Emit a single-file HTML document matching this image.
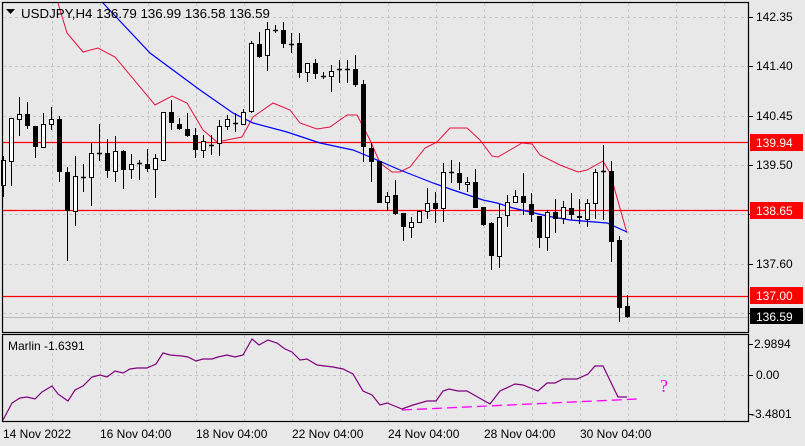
<!DOCTYPE html>
<html><head><meta charset="utf-8"><style>
html,body{margin:0;padding:0;background:#e8e8e8;}
svg{display:block;font-family:"Liberation Sans",sans-serif;}
</style></head><body>
<svg id="s" width="805" height="446" viewBox="0 0 805 446" xmlns="http://www.w3.org/2000/svg">
<rect width="805" height="446" fill="#e8e8e8"/>
<g id="grid" stroke="#c4c4c4" stroke-dasharray="3,3" stroke-width="1"></g>
<g id="lines"></g>
<g id="candles"></g>
<g fill="none" stroke="#000" stroke-width="1.2">
<rect x="2.5" y="2.5" width="746" height="330"/>
<rect x="2.5" y="334.5" width="746" height="87"/>
</g>
<text x="21" y="18" font-size="13.3" fill="#000">USDJPY,H4  136.79 136.99 136.58 136.59</text>
<polygon points="6,9 15,9 10.5,14" fill="#000"/>
<g font-size="12" fill="#000">
<text x="756" y="21">142.35</text>
<text x="756" y="70">141.40</text>
<text x="756" y="120">140.45</text>
<text x="756" y="169">139.50</text>
<text x="756" y="268">137.60</text>
<text x="754" y="348">2.9894</text>
<text x="756" y="379">0.00</text>
<text x="751" y="418">-3.4801</text>
<text x="8" y="350">Marlin -1.6391</text>
<text x="3" y="438">14 Nov 2022</text>
<text x="100" y="438">16 Nov 04:00</text>
<text x="196" y="438">18 Nov 04:00</text>
<text x="292" y="438">22 Nov 04:00</text>
<text x="388" y="438">24 Nov 04:00</text>
<text x="484" y="438">28 Nov 04:00</text>
<text x="580" y="438">30 Nov 04:00</text>
</g>
<rect x="750" y="134" width="53" height="17" fill="#ff0000"/>
<text x="756" y="147" font-size="12" fill="#fff">139.94</text>
<rect x="750" y="202" width="53" height="17" fill="#ff0000"/>
<text x="756" y="215" font-size="12" fill="#fff">138.65</text>
<rect x="750" y="287" width="53" height="17" fill="#ff0000"/>
<text x="756" y="300" font-size="12" fill="#fff">137.00</text>
<rect x="750" y="308" width="53" height="16" fill="#000"/>
<text x="756" y="321" font-size="12" fill="#fff">136.59</text>
<text x="660" y="392" font-size="18" fill="#ff00ff" font-family="Liberation Serif,serif">?</text>
</svg>
<script>
var NS="http://www.w3.org/2000/svg";
function el(p,t,a){var e=document.createElementNS(NS,t);for(var k in a)e.setAttribute(k,a[k]);p.appendChild(e);return e;}
var g=document.getElementById('grid');
for(var x=52;x<748;x+=48){el(g,'line',{x1:x+.5,y1:3,x2:x+.5,y2:332});el(g,'line',{x1:x+.5,y1:335,x2:x+.5,y2:421});}
[17,66,116,165,214,264,313].forEach(function(y){el(g,'line',{x1:3,y1:y+.5,x2:748,y2:y+.5});});
el(g,'line',{x1:3,y1:375.5,x2:748,y2:375.5});
var L=document.getElementById('lines');
[17,66,116,165,214,264,313,344,375,414].forEach(function(y){el(L,'line',{x1:749,y1:y+.5,x2:753,y2:y+.5,stroke:'#000'});});
el(L,'line',{x1:3,y1:317.5,x2:748,y2:317.5,stroke:'#b8b8b8'});
[142,210,296].forEach(function(y){el(L,'line',{x1:3,y1:y+.5,x2:748,y2:y+.5,stroke:'#ff0000','stroke-width':1.3});});
function pl(pts,c,w,extra){var a={points:pts.map(function(p){return p.join(',')}).join(' '),fill:'none',stroke:c,'stroke-width':w};for(var k in extra)a[k]=extra[k];el(L,'polyline',a);}
pl([[58,3],[67,33],[83,52],[98,48],[115,57],[155,105],[172,96],[187,103],[203,130],[217,142],[242,137],[253,117],[273,103],[290,110],[300,123],[317,129],[330,127],[347,115],[357,115],[370,140],[380,163],[392,172],[400,172],[410,167],[425,148],[437,142],[450,128],[467,128],[480,140],[492,156],[498,157],[510,150],[522,143],[532,144],[540,155],[560,165],[578,172],[587,170],[603,161],[610,173],[627,233]],'#e8103c',1);
pl([[103,3],[150,53],[200,90],[233,113],[253,123],[287,132],[320,143],[353,150],[370,157],[400,170],[433,183],[453,190],[483,200],[497,203],[513,208],[547,216],[570,220],[607,223],[627,232]],'#0000ff',1.2);
pl([[3,420],[12,403],[20,398],[27,397],[35,399],[42,392],[52,386],[58,394],[68,401],[75,390],[83,386],[92,377],[100,375],[107,377],[115,371],[123,373],[130,369],[137,368],[147,368],[156,364],[163,353],[170,355],[182,356],[188,357],[196,361],[203,359],[212,359],[218,357],[227,355],[235,357],[243,355],[252,339],[259,345],[268,340],[277,343],[285,349],[292,352],[300,360],[307,359],[317,365],[333,367],[343,369],[353,374],[363,391],[372,395],[380,405],[387,403],[402,409],[413,405],[427,401],[436,401],[443,391],[449,389],[458,391],[467,391],[490,404],[500,391],[515,384],[523,385],[538,391],[547,383],[555,383],[563,379],[577,379],[588,374],[595,366],[603,366],[618,397],[627,397]],'#800080',1.2);
el(L,'line',{x1:402,y1:410,x2:637,y2:399,stroke:'#ff00ff','stroke-width':1.3,'stroke-dasharray':'10,5'});
var C=[[156,197,160,185,1],[118,186,118,161,1],[97,136,114,119,1],[102,129,114,126,0],[126,158,126,147,0],[113,147,124,147,1],[107,130,119,124,1],[116,182,119,172,0],[167,261,172,211,0],[156,226,176,211,1],[164,192,177,177,2],[143,206,153,177,1],[124,161,153,153,2],[139,178,153,171,0],[136,182,151,171,1],[150,189,151,170,0],[154,179,164,169,1],[160,180,163,163,2],[149,172,164,169,0],[154,198,158,169,1],[112,161,112,160,1],[100,130,112,123,0],[118,130,124,129,0],[113,137,129,136,0],[128,158,135,150,0],[135,158,141,150,1],[135,155,145,145,2],[120,156,126,143,1],[115,130,119,126,1],[113,132,123,123,2],[109,125,112,124,1],[41,113,43,111,1],[32,58,44,57,0],[22,71,29,55,1],[25,33,30,30,2],[22,48,30,44,0],[33,53,44,44,2],[33,78,43,73,0],[63,82,63,72,1],[59,79,63,74,0],[72,79,76,76,2],[65,92,71,76,1],[60,83,69,69,2],[60,83,69,69,2],[55,87,69,85,0],[80,162,84,147,0],[143,182,148,162,0],[161,203,161,203,0],[192,211,196,202,1],[180,215,195,214,0],[213,241,213,227,0],[217,238,222,227,1],[210,223,211,222,1],[188,219,203,211,1],[192,223,203,209,0],[163,222,172,208,1],[160,183,172,172,2],[162,190,173,183,0],[177,192,182,184,1],[169,208,182,208,0],[207,226,207,225,0],[222,270,223,256,0],[204,268,217,256,1],[195,227,202,215,1],[190,202,196,202,1],[173,215,196,203,0],[193,222,204,215,0],[216,248,216,238,0],[210,251,212,237,1],[199,233,212,219,0],[201,224,207,218,1],[193,220,208,215,0],[199,224,216,218,0],[199,227,203,219,1],[169,219,172,203,1],[145,220,171,171,2],[161,262,171,242,0],[236,322,240,308,0],[295,318,306,317,0]];
var G=document.getElementById('candles');
C.forEach(function(c,i){var x=3+8*i;
 el(G,'line',{x1:x+.5,y1:c[0],x2:x+.5,y2:c[1],stroke:'#000'});
 if(c[4]==2){el(G,'line',{x1:x-2,y1:c[2]+.5,x2:x+3,y2:c[2]+.5,stroke:'#000','stroke-width':1.5});}
 else if(c[4]==1){el(G,'rect',{x:x-1.5,y:c[2]+.5,width:4,height:Math.max(c[3]-c[2],1),fill:'#fff',stroke:'#000'});}
 else{el(G,'rect',{x:x-2,y:c[2],width:5,height:Math.max(c[3]-c[2],2),fill:'#000'});}
});
</script>
</body></html>
